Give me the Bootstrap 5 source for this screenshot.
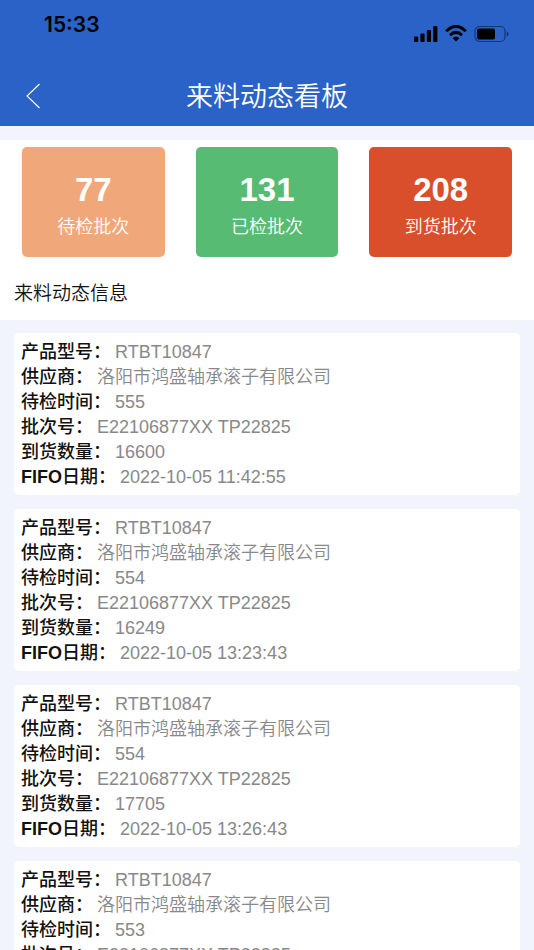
<!DOCTYPE html>
<html lang="zh-CN">
<head>
<meta charset="utf-8">
<meta name="viewport" content="width=device-width, initial-scale=1">
<title>来料动态看板</title>
<link href="https://cdn.jsdelivr.net/npm/bootstrap@5.3.0/dist/css/bootstrap.min.css" rel="stylesheet">
<style>
  body { font-family: "Liberation Sans", "Noto Sans CJK SC", sans-serif; background: #f1f4fd; color: #111; }
  .screen { overflow-y: auto; scrollbar-width: none; }
  .screen::-webkit-scrollbar { display: none; }
  .app-head { background: #2a62c8; height: 126px; }
  .status-bar { height: 66px; padding: 0 24px 0 44px; color: #000; }
  .clock { font: 600 21px/24px Inter, sans-serif; padding-top: 13px; }
  .status-icons { padding-top: 25px; gap: 7px; }
  .title-bar { height: 60px; padding: 2px 20px 0; }
  .back { width: 32px; height: 40px; }
  .page-title { font-size: 27px; line-height: 40px; font-weight: 350; }
  .summary { margin-top: 14px; padding: 7px 22px 0; }
  .tiles { gap: 31px; }
  .tile { flex: 1 1 0; height: 110px; border-radius: 5px; padding-top: 24px; }
  .tile-wait { background: #f0a87b; }
  .tile-done { background: #58bb74; }
  .tile-all { background: #d94e2b; }
  .tile-num { font-size: 33px; line-height: 38px; }
  .tile-name { font-size: 18px; line-height: 36px; font-weight: 350; }
  .section-title { font-size: 19px; line-height: 24px; font-weight: 350; margin: 0 -8px; padding: 25px 0 14px; }
  .records { padding: 13px 14px; gap: 14px; }
  .record { border-radius: 5px; padding: 7px 7px 5px; font-size: 18px; line-height: 25px; }
  .record dt { font-weight: 500; }
  .record dd { font-weight: 350; color: #888; margin-left: 4px; }
</style>
</head>
<body>
<div class="screen vh-100">
  <header class="app-head">
    <div class="status-bar d-flex justify-content-between align-items-start">
      <div class="clock">15:33</div>
      <div class="status-icons d-flex">
        <svg width="24" height="18" viewBox="0 0 24 18" aria-hidden="true"><rect x="0" y="11.500" width="4.200" height="5.500" rx="1"/><rect x="6.400" y="8.500" width="4.200" height="8.500" rx="1"/><rect x="12.800" y="5" width="4.200" height="12" rx="1"/><rect x="19.200" y="1" width="4.200" height="16" rx="1"/></svg>
        <svg width="22" height="18" viewBox="0 0 22 18" aria-hidden="true"><g fill="none" stroke="#000" stroke-width="3"><path d="M1.200 6.200Q11-3.600 20.800 6.200"/><path d="M5 10.200Q11 4.600 17 10.200"/></g><path d="M7.600 13Q11 10 14.400 13L11 16.600Z"/></svg>
        <svg width="36" height="18" viewBox="0 0 36 18" aria-hidden="true"><rect x="1" y="1.500" width="30" height="15" rx="4.500" fill="none" stroke="#17366e" stroke-width="1.200"/><rect x="3" y="3.500" width="18" height="11" rx="2"/><path d="M32.700 6.500Q34.600 7.200 34.600 9T32.700 11.500Z" fill="#17366e"/></svg>
      </div>
    </div>
    <div class="title-bar d-flex align-items-center">
      <button type="button" class="back btn p-0 border-0 d-flex align-items-center" aria-label="返回">
        <svg width="24" height="28" viewBox="0 0 24 28" fill="none" stroke="#fff" stroke-width="1.100"><path d="M19.500 1L7 13L19.500 25"/></svg>
      </button>
      <h1 class="page-title text-white text-center flex-grow-1 mb-0">来料动态看板</h1>
      <span class="back"></span>
    </div>
  </header>
  <section class="summary bg-white">
    <div class="tiles d-flex text-white text-center">
      <div class="tile tile-wait"><div class="tile-num fw-bold">77</div><div class="tile-name">待检批次</div></div>
      <div class="tile tile-done"><div class="tile-num fw-bold">131</div><div class="tile-name">已检批次</div></div>
      <div class="tile tile-all"><div class="tile-num fw-bold">208</div><div class="tile-name">到货批次</div></div>
    </div>
    <h2 class="section-title">来料动态信息</h2>
  </section>
  <main class="records d-flex flex-column">
    <dl class="record bg-white mb-0">
      <div class="d-flex"><dt>产品型号：</dt><dd class="mb-0">RTBT10847</dd></div>
      <div class="d-flex"><dt>供应商：</dt><dd class="mb-0">洛阳市鸿盛轴承滚子有限公司</dd></div>
      <div class="d-flex"><dt>待检时间：</dt><dd class="mb-0">555</dd></div>
      <div class="d-flex"><dt>批次号：</dt><dd class="mb-0">E22106877XX TP22825</dd></div>
      <div class="d-flex"><dt>到货数量：</dt><dd class="mb-0">16600</dd></div>
      <div class="d-flex"><dt><span class="fw-bold">FIFO</span>日期：</dt><dd class="mb-0">2022-10-05 11:42:55</dd></div>
    </dl>
    <dl class="record bg-white mb-0">
      <div class="d-flex"><dt>产品型号：</dt><dd class="mb-0">RTBT10847</dd></div>
      <div class="d-flex"><dt>供应商：</dt><dd class="mb-0">洛阳市鸿盛轴承滚子有限公司</dd></div>
      <div class="d-flex"><dt>待检时间：</dt><dd class="mb-0">554</dd></div>
      <div class="d-flex"><dt>批次号：</dt><dd class="mb-0">E22106877XX TP22825</dd></div>
      <div class="d-flex"><dt>到货数量：</dt><dd class="mb-0">16249</dd></div>
      <div class="d-flex"><dt><span class="fw-bold">FIFO</span>日期：</dt><dd class="mb-0">2022-10-05 13:23:43</dd></div>
    </dl>
    <dl class="record bg-white mb-0">
      <div class="d-flex"><dt>产品型号：</dt><dd class="mb-0">RTBT10847</dd></div>
      <div class="d-flex"><dt>供应商：</dt><dd class="mb-0">洛阳市鸿盛轴承滚子有限公司</dd></div>
      <div class="d-flex"><dt>待检时间：</dt><dd class="mb-0">554</dd></div>
      <div class="d-flex"><dt>批次号：</dt><dd class="mb-0">E22106877XX TP22825</dd></div>
      <div class="d-flex"><dt>到货数量：</dt><dd class="mb-0">17705</dd></div>
      <div class="d-flex"><dt><span class="fw-bold">FIFO</span>日期：</dt><dd class="mb-0">2022-10-05 13:26:43</dd></div>
    </dl>
    <dl class="record bg-white mb-0">
      <div class="d-flex"><dt>产品型号：</dt><dd class="mb-0">RTBT10847</dd></div>
      <div class="d-flex"><dt>供应商：</dt><dd class="mb-0">洛阳市鸿盛轴承滚子有限公司</dd></div>
      <div class="d-flex"><dt>待检时间：</dt><dd class="mb-0">553</dd></div>
      <div class="d-flex"><dt>批次号：</dt><dd class="mb-0">E22106877XX TP22825</dd></div>
    </dl>
  </main>
</div>
<script src="https://cdn.jsdelivr.net/npm/bootstrap@5.3.0/dist/js/bootstrap.bundle.min.js"></script>
</body>
</html>
